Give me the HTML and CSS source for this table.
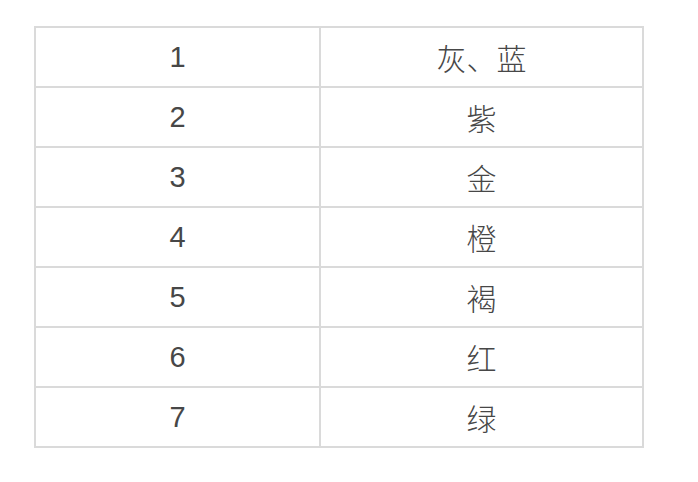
FILE: index.html
```html
<!DOCTYPE html>
<html lang="zh">
<head>
<meta charset="utf-8">
<link rel="stylesheet" href="styles.css">
</head>
<body>
<div class="page">
<table class="grid">
<tbody>
<tr><td class="num">1</td><td class="name">灰、蓝</td></tr>
<tr><td class="num">2</td><td class="name">紫</td></tr>
<tr><td class="num">3</td><td class="name">金</td></tr>
<tr><td class="num">4</td><td class="name">橙</td></tr>
<tr><td class="num">5</td><td class="name">褐</td></tr>
<tr><td class="num">6</td><td class="name">红</td></tr>
<tr><td class="num">7</td><td class="name">绿</td></tr>
</tbody>
</table>
</div>
</body>
</html>
```
FILE: styles.css
```css
html, body {
  margin: 0;
  padding: 0;
  background: #ffffff;
}
.page {
  padding: 26px 0 0 34px;
}
.grid {
  border-collapse: collapse;
  width: 610px;
  font-family: "Liberation Sans", "Noto Sans CJK SC", sans-serif;
  font-size: 29px;
  color: #474747;
}
.grid td {
  border: 2px solid #dadada;
  height: 58px;
  padding: 0;
  text-align: center;
  vertical-align: middle;
  line-height: 1;
}
.num {
  width: 283px;
}
.name {
  font-family: "Noto Sans CJK SC", sans-serif;
  font-weight: 300;
  font-size: 30px;
}
```
